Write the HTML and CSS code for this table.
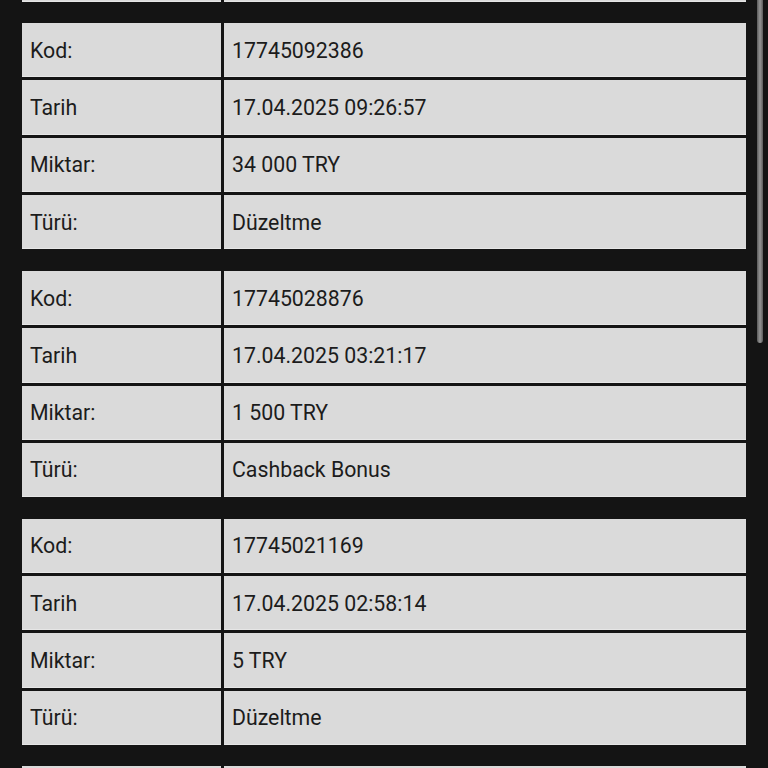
FILE: index.html
```html
<!DOCTYPE html>
<html lang="tr">
<head>
<meta charset="utf-8">
<title>İşlemler</title>
<link rel="stylesheet" href="styles.css">
</head>
<body>
<div class="list">
  <div class="tx stub">
    <div class="cell"></div><div class="cell"></div>
  </div>
  <div class="tx">
    <div class="cell">Kod:</div><div class="cell">17745092386</div>
    <div class="cell">Tarih</div><div class="cell">17.04.2025 09:26:57</div>
    <div class="cell">Miktar:</div><div class="cell">34 000 TRY</div>
    <div class="cell">Türü:</div><div class="cell">Düzeltme</div>
  </div>
  <div class="tx">
    <div class="cell">Kod:</div><div class="cell">17745028876</div>
    <div class="cell">Tarih</div><div class="cell">17.04.2025 03:21:17</div>
    <div class="cell">Miktar:</div><div class="cell">1 500 TRY</div>
    <div class="cell">Türü:</div><div class="cell">Cashback Bonus</div>
  </div>
  <div class="tx">
    <div class="cell">Kod:</div><div class="cell">17745021169</div>
    <div class="cell">Tarih</div><div class="cell">17.04.2025 02:58:14</div>
    <div class="cell">Miktar:</div><div class="cell">5 TRY</div>
    <div class="cell">Türü:</div><div class="cell">Düzeltme</div>
  </div>
  <div class="tx stub">
    <div class="cell"></div><div class="cell"></div>
  </div>
</div>
<div class="scrollbar"></div>
</body>
</html>
```
FILE: styles.css
```css
html, body {
  margin: 0;
  padding: 0;
  background: #141414;
  height: 768px;
  overflow: hidden;
}
body {
  font-family: Roboto, "Noto Sans", "Liberation Sans", sans-serif;
  font-size: 21.3px;
  color: #1c1c1c;
  position: relative;
}
.list {
  display: flex;
  flex-direction: column;
  gap: 21.5px;
  margin-top: -52.8px;
  padding-left: 22px;
}
.tx {
  display: grid;
  grid-template-columns: 199px 522px;
  grid-auto-rows: 54.33px;
  gap: 3px;
  width: 724px;
}
.cell {
  background: #dadada;
  display: flex;
  align-items: center;
  padding-left: 8px;
  box-shadow: inset 0 -1px 0 #e6e6e6;
}
.scrollbar {
  position: absolute;
  left: 757px;
  top: 0;
  width: 6px;
  height: 343px;
  background: linear-gradient(to right, #5a5a5a, #8c8c8c 40%, #8c8c8c 60%, #5a5a5a);
  border-radius: 0 0 3px 3px;
}
```
